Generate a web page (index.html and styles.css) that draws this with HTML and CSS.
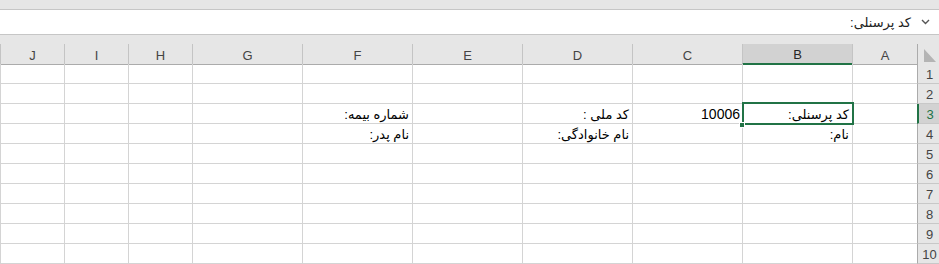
FILE: index.html
```html
<!DOCTYPE html>
<html>
<head>
    <title>Sheet1 - Excel</title>
    <link rel="stylesheet" href="styles.css">
</head>
<body>
    <div class="top-strip"></div>

    <div class="formula-bar" dir="rtl">
        <span class="formula-toggle">
            <svg width="9" height="6" viewBox="0 0 9 6"><path d="M1 1 L4.5 4.5 L8 1" fill="none" stroke="#555" stroke-width="1.4"/></svg>
        </span>
        <span class="formula-text">کد پرسنلی:</span>
    </div>

    <div class="mid-strip"></div>

    <div class="sheet" dir="rtl">
        <!-- column headers -->
        <div class="corner">
            <svg class="select-all" width="12" height="13" viewBox="0 0 12 13"><polygon points="0,0 0,13 12,13" fill="#b4b4b4"/></svg>
        </div>
        <div class="col-head">A</div>
        <div class="col-head active">B</div>
        <div class="col-head">C</div>
        <div class="col-head">D</div>
        <div class="col-head">E</div>
        <div class="col-head">F</div>
        <div class="col-head">G</div>
        <div class="col-head">H</div>
        <div class="col-head">I</div>
        <div class="col-head">J</div>

        <!-- row 1 -->
        <div class="row-head">1</div>
        <div class="cell"></div><div class="cell"></div><div class="cell"></div><div class="cell"></div><div class="cell"></div>
        <div class="cell"></div><div class="cell"></div><div class="cell"></div><div class="cell"></div><div class="cell"></div>

        <!-- row 2 -->
        <div class="row-head">2</div>
        <div class="cell"></div><div class="cell"></div><div class="cell"></div><div class="cell"></div><div class="cell"></div>
        <div class="cell"></div><div class="cell"></div><div class="cell"></div><div class="cell"></div><div class="cell"></div>

        <!-- row 3 -->
        <div class="row-head active">3</div>
        <div class="cell"></div>
        <div class="cell selected">کد پرسنلی:<span class="fill-handle"></span></div>
        <div class="cell number">10006</div>
        <div class="cell">کد ملی :</div>
        <div class="cell"></div>
        <div class="cell">شماره بیمه:</div>
        <div class="cell"></div><div class="cell"></div><div class="cell"></div><div class="cell"></div>

        <!-- row 4 -->
        <div class="row-head">4</div>
        <div class="cell"></div>
        <div class="cell">نام:</div>
        <div class="cell"></div>
        <div class="cell">نام خانوادگی:</div>
        <div class="cell"></div>
        <div class="cell">نام پدر:</div>
        <div class="cell"></div><div class="cell"></div><div class="cell"></div><div class="cell"></div>

        <!-- row 5 -->
        <div class="row-head">5</div>
        <div class="cell"></div><div class="cell"></div><div class="cell"></div><div class="cell"></div><div class="cell"></div>
        <div class="cell"></div><div class="cell"></div><div class="cell"></div><div class="cell"></div><div class="cell"></div>

        <!-- row 6 -->
        <div class="row-head">6</div>
        <div class="cell"></div><div class="cell"></div><div class="cell"></div><div class="cell"></div><div class="cell"></div>
        <div class="cell"></div><div class="cell"></div><div class="cell"></div><div class="cell"></div><div class="cell"></div>

        <!-- row 7 -->
        <div class="row-head">7</div>
        <div class="cell"></div><div class="cell"></div><div class="cell"></div><div class="cell"></div><div class="cell"></div>
        <div class="cell"></div><div class="cell"></div><div class="cell"></div><div class="cell"></div><div class="cell"></div>

        <!-- row 8 -->
        <div class="row-head">8</div>
        <div class="cell"></div><div class="cell"></div><div class="cell"></div><div class="cell"></div><div class="cell"></div>
        <div class="cell"></div><div class="cell"></div><div class="cell"></div><div class="cell"></div><div class="cell"></div>

        <!-- row 9 -->
        <div class="row-head">9</div>
        <div class="cell"></div><div class="cell"></div><div class="cell"></div><div class="cell"></div><div class="cell"></div>
        <div class="cell"></div><div class="cell"></div><div class="cell"></div><div class="cell"></div><div class="cell"></div>

        <!-- row 10 -->
        <div class="row-head">10</div>
        <div class="cell"></div><div class="cell"></div><div class="cell"></div><div class="cell"></div><div class="cell"></div>
        <div class="cell"></div><div class="cell"></div><div class="cell"></div><div class="cell"></div><div class="cell"></div>
    </div>
</body>
</html>
```

FILE: styles.css
```css
* {
    box-sizing: border-box;
}

body {
    margin: 0;
    background: #e6e6e6;
    font-family: 'Liberation Sans', 'DejaVu Sans', sans-serif;
    overflow: hidden;
}

.top-strip {
    height: 9px;
    background: #e6e6e6;
}

.formula-bar {
    height: 26px;
    background: #fff;
    border-top: 1px solid #c6c6c6;
    border-bottom: 1px solid #c6c6c6;
    display: flex;
    align-items: center;
    padding-right: 9px;
    font-size: 13px;
    color: #222;
}

.formula-toggle {
    display: flex;
    align-items: center;
    margin-left: 10px;
}

.mid-strip {
    height: 9px;
    background: #e6e6e6;
}

.sheet {
    display: grid;
    grid-template-columns: 22px 65px repeat(6, 110px) repeat(3, 64px);
    grid-auto-rows: 20px;
    background: #fff;
    font-size: 13px;
}

.corner,
.col-head,
.row-head {
    background: #e6e6e6;
    color: #444;
}

.col-head {
    height: 21px;
    margin-bottom: -1px;
    border-left: 1px solid #c4c4c4;
    border-bottom: 1px solid #ababab;
    display: flex;
    align-items: center;
    justify-content: center;
    font-size: 13px;
    padding-top: 2px;
}

.col-head.active {
    background: #d2d2d2;
    color: #262626;
    border-bottom: 2px solid #217346;
}

.corner {
    height: 21px;
    margin-bottom: -1px;
    border-left: 1px solid #ababab;
    border-bottom: 1px solid #ababab;
    display: flex;
    align-items: flex-end;
    justify-content: flex-start;
    padding-right: 3px;
    padding-bottom: 2px;
}

.row-head {
    border-left: 1px solid #ababab;
    border-bottom: 1px solid #c8c8c8;
    display: flex;
    align-items: flex-end;
    justify-content: center;
    padding-left: 2px;
    padding-bottom: 1px;
    font-size: 13px;
}

.row-head.active {
    background: #d2d2d2;
    color: #217346;
    border-left: 2px solid #217346;
}

.cell {
    border-left: 1px solid #d4d4d4;
    border-bottom: 1px solid #d4d4d4;
    padding: 0 3px;
    display: flex;
    align-items: flex-end;
    padding-bottom: 1px;
    white-space: nowrap;
    color: #000;
    font-size: 13px;
}

.cell.number {
    padding-right: 2px;
    font-family: 'Liberation Sans', sans-serif;
    font-size: 14px;
}

.cell.selected {
    position: relative;
}

.cell.selected::after {
    content: '';
    position: absolute;
    top: -2px;
    left: -1px;
    right: -2px;
    bottom: -2px;
    border: 2px solid #217346;
}

.fill-handle {
    position: absolute;
    left: -4px;
    bottom: -5px;
    width: 6px;
    height: 6px;
    background: #217346;
    border: 1px solid #fff;
    z-index: 2;
}
```
